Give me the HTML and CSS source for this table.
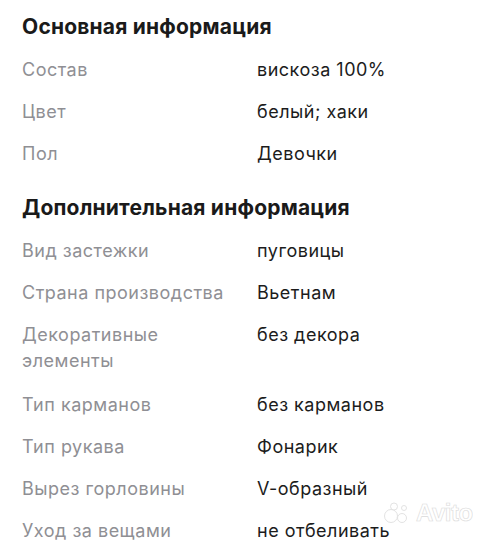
FILE: index.html
```html
<!DOCTYPE html>
<html lang="ru">
<head>
<meta charset="utf-8">
<link rel="stylesheet" href="styles.css">
</head>
<body>
<div class="page">
  <section class="block">
    <h2 class="title">Основная информация</h2>
    <dl class="params">
      <div class="row"><dt>Состав</dt><dd>вискоза 100%</dd></div>
      <div class="row"><dt>Цвет</dt><dd>белый; хаки</dd></div>
      <div class="row"><dt>Пол</dt><dd>Девочки</dd></div>
    </dl>
  </section>
  <section class="block">
    <h2 class="title">Дополнительная информация</h2>
    <dl class="params">
      <div class="row"><dt>Вид застежки</dt><dd>пуговицы</dd></div>
      <div class="row"><dt>Страна производства</dt><dd>Вьетнам</dd></div>
      <div class="row row-multi"><dt>Декоративные<br>элементы</dt><dd>без декора</dd></div>
      <div class="row"><dt>Тип карманов</dt><dd>без карманов</dd></div>
      <div class="row"><dt>Тип рукава</dt><dd>Фонарик</dd></div>
      <div class="row"><dt>Вырез горловины</dt><dd>V-образный</dd></div>
      <div class="row"><dt>Уход за вещами</dt><dd>не отбеливать</dd></div>
    </dl>
  </section>
</div>
<div class="watermark">
  <svg class="wm-dots" width="30" height="22" viewBox="0 0 30 22">
    <circle cx="8" cy="14" r="6.5"/>
    <circle cx="19" cy="16" r="4.5"/>
    <circle cx="11" cy="4.5" r="3.5"/>
    <circle cx="21" cy="6" r="2.5"/>
  </svg>
  <span class="wm-text">Avito</span>
</div>
</body>
</html>
```
FILE: styles.css
```css
html, body {
  margin: 0;
  padding: 0;
  background: #ffffff;
}
body {
  font-family: Inter, "Noto Sans", sans-serif;
  color: #1a1a1a;
  width: 488px;
  height: 540px;
  overflow: hidden;
  position: relative;
}
.page {
  padding: 14px 22px 0;
  display: flex;
  flex-direction: column;
  gap: 28px;
}
.block {
  display: flex;
  flex-direction: column;
  gap: 17px;
}
.title {
  margin: 0;
  font-size: 21px;
  line-height: 26px;
  font-weight: 700;
  color: #1a1a1a;
  letter-spacing: 0.2px;
}
.params {
  margin: 0;
  display: flex;
  flex-direction: column;
  gap: 16px;
}
.row {
  display: grid;
  grid-template-columns: 235px 1fr;
  font-size: 18px;
  line-height: 26px;
  letter-spacing: 0.5px;
}
.row-multi {
  padding-bottom: 2px;
}
.row dt {
  color: #8f8f94;
}
.row dd {
  margin: 0;
  color: #1c1c1c;
}
.watermark {
  position: absolute;
  left: 383px;
  top: 501px;
  display: flex;
  align-items: center;
  gap: 3px;
  opacity: 0.9;
}
.wm-dots circle {
  fill: #ffffff;
  stroke: #d8d8d8;
  stroke-width: 0.8;
}
.wm-text {
  font-family: "Liberation Sans", Arial, sans-serif;
  font-size: 24px;
  font-weight: 700;
  color: #ffffff;
  line-height: 24px;
  -webkit-text-stroke: 0.6px #d6d6d6;
  letter-spacing: -0.5px;
}
```
